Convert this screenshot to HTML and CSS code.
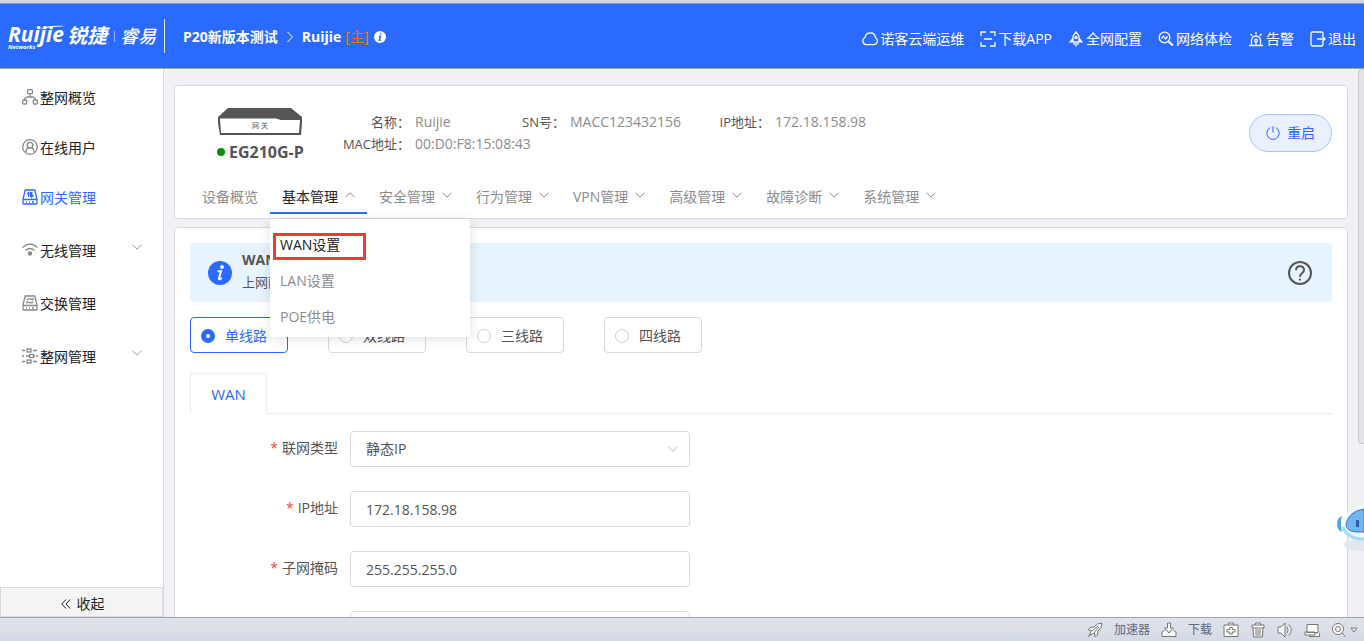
FILE: index.html
```html
<!DOCTYPE html>
<html lang="zh-CN">
<head>
<meta charset="utf-8">
<title>Ruijie 网关管理</title>
<link rel="stylesheet" href="styles.css">
</head>
<body>
<svg class="defs" aria-hidden="true">
  <symbol id="down" viewBox="0 0 10 6"><path d="M.5.7 5 5.200 9.500.7"/></symbol>
  <symbol id="up" viewBox="0 0 10 6"><path d="M.5 5.200 5 .7l4.500 4.500"/></symbol>
</svg>
<header class="header">
  <div class="logo">
    <span class="logo-latin"><span class="logo-name">Ruijie</span><small class="logo-sub">Networks</small></span>
    <span class="logo-cn">锐捷</span>
    <span class="logo-bar"></span>
    <span class="logo-brand">睿易</span>
    <svg class="logo-swoosh" viewBox="0 0 28 6" aria-hidden="true"><path d="M0 4Q10 0 27 1 13 2 0 4Z"/></svg>
  </div>
  <nav class="crumbs" aria-label="位置">
    <a href="#">P20新版本测试</a>
    <svg class="crumb-sep" viewBox="0 0 8 12"><path d="m1.500 1 5 5-5 5"/></svg>
    <a href="#">Ruijie</a>
    <span class="role">[主]</span>
    <svg class="crumb-info" viewBox="0 0 12 12"><circle cx="6" cy="6" r="6"/><path d="M6.700 2.200v1.200M5.100 5.200h1.200L5.400 9.200h1.300"/></svg>
  </nav>
  <nav class="tools" aria-label="工具">
    <a href="#"><svg class="icon" viewBox="0 0 16 16"><path d="M4.300 13.700A3.800 3.800 0 0 1 3 6.500C3.500 3.500 5.600 1.800 8.300 1.800c2.800 0 4.800 2 5.100 4.700a3.900 3.900 0 0 1-1.200 7.200Z"/></svg>诺客云端运维</a>
    <a href="#"><svg class="icon" viewBox="0 0 16 16"><path d="M1 5V1h5M10 1h5v4M1 11v4h5M10 15h5v-4M4 8h8"/></svg>下载APP</a>
    <a href="#"><svg class="icon" viewBox="0 0 16 16"><path d="M5 11V5.200L8 1l3 4.200V11ZM5 7.500 2.200 10.800H5M11 7.500l2.800 3.300H11M6 12v2M8 12v3.500M10 12v2"/><circle cx="8" cy="6.500" r="1"/></svg>全网配置</a>
    <a href="#"><svg class="icon" viewBox="0 0 16 16"><circle cx="6.500" cy="6.500" r="5.300"/><path d="m3.500 7.500 2-2.500L7.500 8l2-2.500"/><path class="thick" d="m10.800 10.800 4 3.700"/></svg>网络体检</a>
    <a href="#"><svg class="icon" viewBox="0 0 16 16"><path d="M1 14.500h14M3.500 14V9.500a4.500 4.500 0 0 1 9 0V14M8 1v2.500M2.500 3l1.800 1.800M13.500 3l-1.800 1.800M8 11v3"/><circle cx="8" cy="9.500" r="1.300"/></svg>告警</a>
    <a href="#"><svg class="icon" viewBox="0 0 16 16"><path d="M13 5V2.500Q13 1 11.500 1h-9Q1 1 1 2.500v11Q1 15 2.500 15h9q1.500 0 1.500-1.500V11M7 8h8M12 5l3 3-3 3"/></svg>退出</a>
  </nav>
</header>

<div class="main">
  <aside class="sidebar">
    <ul class="menu">
      <li><a href="#"><svg class="icon" viewBox="0 0 16 16"><rect x="5.500" y=".7" width="5" height="4" rx="1"/><rect x=".7" y="11" width="4" height="4" rx="1"/><rect x="11.300" y="11" width="4" height="4" rx="1"/><path d="M8 5v3M2.700 11V9.500L5 8h6l2.300 1.500V11"/></svg>整网概览</a></li>
      <li><a href="#"><svg class="icon" viewBox="0 0 16 16"><circle cx="8" cy="8" r="7.300"/><circle cx="8" cy="6.200" r="2.800"/><path d="M3.800 13.300c0-2.300 1-3.800 2.400-4.700M12.200 13.300c0-2.300-1-3.800-2.400-4.700"/></svg>在线用户</a></li>
      <li class="current"><a href="#"><svg class="icon" viewBox="0 0 16 16"><path d="M3.200 1h9.600l2.200 9v4.500q0 .5-.5.500h-13q-.5 0-.5-.5V10ZM1 10.500h14M4 13h1M7 13h1M10 13h2M6.500 8V3.500L5 5M8.500 3v5M9.800 3v5l1.500-1.800"/></svg>网关管理</a></li>
      <li class="tall"><a href="#"><svg class="icon" viewBox="0 0 16 16"><path d="M.5 5.500Q8-1.500 15.500 5.500M3.500 8.500Q8 4.500 12.500 8.500"/><circle class="solid" cx="8" cy="11.500" r="1.500"/></svg>无线管理<svg class="chev" viewBox="0 0 10 6"><use href="#down"/></svg></a></li>
      <li class="tall"><a href="#"><svg class="icon" viewBox="0 0 16 16"><path d="M3.200 1h9.600l2.200 9v4.500q0 .5-.5.500h-13q-.5 0-.5-.5V10ZM1 10.500h14M4 13h1M7 13h1M10 13h2M5 5q2-2.500 5-.5h1V3M11 6.500q-2 2.500-5 .5H5v1.500"/></svg>交换管理</a></li>
      <li class="tall"><a href="#"><svg class="icon" viewBox="0 0 16 16"><path d="M0 2.500h3M11 2.500h4M0 8h2M4 8h3M12 8h1M14 8h2M0 13.500h3M11 13.500h4"/><rect x="5" y="1" width="4" height="3"/><rect x="7.500" y="6.500" width="4" height="3"/><rect x="5" y="12" width="4" height="3"/></svg>整网管理<svg class="chev" viewBox="0 0 10 6"><use href="#down"/></svg></a></li>
    </ul>
    <button class="collapse" type="button"><svg viewBox="0 0 10 10"><path d="M5 .5.8 5 5 9.500M9.200.5 5 5l4.200 4.500"/></svg>收起</button>
  </aside>

  <main class="content">
    <section class="card device-card">
      <div class="device">
        <div class="device-id">
          <svg class="device-pic" viewBox="0 0 84 27"><path class="dark" d="M10 0h63l11 9v6l-1 12H2L0 15V9Z"/><path class="face" d="M2 10.500h56l5 1.500h19L81 25H3Z"/><text x="42" y="20">网 关</text></svg>
          <strong class="model"><span class="dot"></span>EG210G-P</strong>
        </div>
        <dl class="facts">
          <dt>名称：</dt><dd>Ruijie</dd>
          <dt>SN号：</dt><dd>MACC123432156</dd>
          <dt>IP地址：</dt><dd>172.18.158.98</dd>
          <dt>MAC地址：</dt><dd>00:D0:F8:15:08:43</dd>
        </dl>
        <button class="restart" type="button"><svg viewBox="0 0 14 14"><path d="M4.300 1.600a6.200 6.200 0 1 0 5.400 0M7 .3v6.200"/></svg>重启</button>
      </div>
      <nav class="subnav" aria-label="网关管理">
        <div><a href="#">设备概览</a></div>
        <div class="open"><a href="#">基本管理<svg class="chev" viewBox="0 0 10 6"><use href="#up"/></svg></a>
          <ul class="dropdown">
            <li class="marked"><a href="#">WAN设置</a></li>
            <li><a href="#">LAN设置</a></li>
            <li><a href="#">POE供电</a></li>
          </ul>
        </div>
        <div><a href="#">安全管理<svg class="chev" viewBox="0 0 10 6"><use href="#down"/></svg></a></div>
        <div><a href="#">行为管理<svg class="chev" viewBox="0 0 10 6"><use href="#down"/></svg></a></div>
        <div><a href="#">VPN管理<svg class="chev" viewBox="0 0 10 6"><use href="#down"/></svg></a></div>
        <div><a href="#">高级管理<svg class="chev" viewBox="0 0 10 6"><use href="#down"/></svg></a></div>
        <div><a href="#">故障诊断<svg class="chev" viewBox="0 0 10 6"><use href="#down"/></svg></a></div>
        <div><a href="#">系统管理<svg class="chev" viewBox="0 0 10 6"><use href="#down"/></svg></a></div>
      </nav>
    </section>

    <section class="card wan-card">
      <div class="notice">
        <svg class="notice-icon" viewBox="0 0 24 24"><circle cx="12" cy="12" r="12"/><path d="M9.500 10.200h3.500l-2.100 7.300q-.1 1 .8.800l2-1.300"/><circle class="pip" cx="14" cy="6" r="1.900"/></svg>
        <div class="notice-text"><strong>WAN</strong><span>上网配</span></div>
        <button class="help" type="button" aria-label="帮助"><svg viewBox="0 0 24 24"><circle cx="12" cy="12" r="11"/><path d="M8 9.200Q8 5.300 12 5.300t4 3.700q0 1.700-2 3.200t-2 3.600"/><path d="M12 17.800v1.800"/></svg></button>
      </div>
      <div class="lines" role="radiogroup" aria-label="线路">
        <label><input type="radio" name="line" checked>单线路</label>
        <label><input type="radio" name="line">双线路</label>
        <label><input type="radio" name="line">三线路</label>
        <label><input type="radio" name="line">四线路</label>
      </div>
      <div class="tabs"><button class="tab" type="button">WAN</button></div>
      <form class="form">
        <div class="row"><label for="type"><i>*</i>联网类型</label>
          <div class="select"><select id="type"><option>静态IP</option></select><svg class="chev" viewBox="0 0 10 6"><use href="#down"/></svg></div></div>
        <div class="row"><label for="ip"><i>*</i>IP地址</label><input id="ip" type="text" value="172.18.158.98"></div>
        <div class="row"><label for="mask"><i>*</i>子网掩码</label><input id="mask" type="text" value="255.255.255.0"></div>
        <div class="row"><span></span><input type="text" aria-label="网关"></div>
      </form>
    </section>
  </main>
  <div class="scrollbar" aria-hidden="true"><div class="thumb"></div></div>
</div>

<footer class="status">
  <button type="button"><svg viewBox="0 0 16 16"><path d="M15 1q-5 0-8 4L3 5.500 1.500 8l3 .5L2 13.500 7.500 11l.5 3.500 2.500-1.500.5-4q4-3 4-8ZM5 9l6-5M7 11l5-6M1 15l3-3"/></svg>加速器</button>
  <button type="button"><svg viewBox="0 0 16 16"><path d="M3.500 8.500 1 10v4.500h14V10l-2.500-1.500M6.500 1h3v5h3L8 11 3.500 6h3Z"/></svg>下载</button>
  <button type="button" aria-label="医生"><svg viewBox="0 0 16 16"><path d="M5.500 3V1h5v2M1 3h14v11.500H1ZM6.700 5.500h2.600v2H12V10H9.300v2H6.700v-2H4V7.500h2.700Z"/></svg></button>
  <button type="button" aria-label="清理"><svg viewBox="0 0 16 16"><path d="M5.500 3V1h5v2M2 3h12v3H2ZM3 6l.5 9h9L13 6M6 7v7M8 7v7M10 7v7"/></svg></button>
  <button type="button" aria-label="声音"><svg viewBox="0 0 16 16"><path d="M1 5h3l4-4v14l-4-4H1ZM10 5q2 3 0 6M12 2.500q4.500 5.500 0 11"/></svg></button>
  <button type="button" aria-label="窗口"><svg viewBox="0 0 16 16"><path d="M5 14.500h10.500V11M3 2.500h11v8H3ZM1 10h10v3H1Z"/></svg></button>
  <button class="zoom" type="button" aria-label="缩放"><svg viewBox="0 0 16 16"><circle cx="7" cy="7" r="5.500"/><circle cx="7" cy="7" r="2.500"/><path d="m11 11 3.500 3.500"/></svg><svg class="tri" viewBox="0 0 8 6"><path d="M1 1h6L4 5Z"/></svg></button>
</footer>
<svg class="robot" viewBox="0 0 28 48" aria-hidden="true"><ellipse class="r-shade" cx="26" cy="40" rx="18" ry="6"/><path class="r-ear" d="M6 11Q1 13 1 19t5 8Q4 19 6 11Z"/><path class="r-shell" d="M28 0Q13 2 8 13q-5 14 6 19 6 3 14 2Z"/><path class="r-ring" d="M7 22q4 12 21 12"/><path class="r-face" d="M28 4Q13 6 10 19q0 7 10 8h8Z"/><path class="r-eye" d="M20 15h3v7h-3Z"/></svg>
</body>
</html>
```
FILE: styles.css
```css
*, *::after { box-sizing: border-box; }
body {
  margin: 0;
  height: 100vh;
  display: flex;
  flex-direction: column;
  overflow: hidden;
  border-top: 3px solid #cdd3e0;
  background: #f0f1f5;
  color: #555;
  font: 14px/20px "Open Sans", "Noto Sans CJK SC", sans-serif;
}
a { color: inherit; text-decoration: none; }
ul, dl, dd { margin: 0; padding: 0; list-style: none; }
button, input, select { font: inherit; color: inherit; }
button { padding: 0; border: 0; background: none; }
svg { flex: none; fill: none; stroke: currentColor; }
.defs { position: absolute; width: 0; height: 0; }
.icon { width: 16px; height: 16px; stroke-width: 1.3; }
.chev { width: 10px; height: 6px; }

.header {
  flex: none;
  display: flex;
  align-items: center;
  height: 66px;
  padding-right: 8px;
  border-top: 1px solid #8c9cc0;
  border-bottom: 1px solid #a5a5a8;
  background: #2b6aff;
  color: #fff;
}
.logo {
  position: relative;
  display: flex;
  align-items: center;
  width: 165px;
  height: 34px;
  padding-left: 8px;
  border-right: 1px solid #dce6ff;
  font-style: italic;
  font-weight: bold;
}
.logo-latin { display: flex; flex-direction: column; width: 59px; padding-top: 4px; }
.logo-name { font: italic bold 21px/18px "Open Sans", sans-serif; }
.logo-sub { font-size: 6px; line-height: 8px; }
.logo-cn { font-size: 20px; }
.logo-bar { width: 1px; height: 11px; margin: 0 5px 0 7px; background: #8fb0ff; }
.logo-brand { font-size: 18px; font-weight: 500; }
.logo-swoosh { position: absolute; left: 39px; top: 6px; width: 28px; height: 6px; fill: #fff; stroke: none; }
.crumbs { display: flex; align-items: center; margin-left: 18px; padding-top: 2px; font-weight: bold; }
.crumb-sep { width: 8px; height: 12px; margin: 0 8px; }
.role { margin: 0 5px 0 4px; color: #ff6a1a; font-weight: normal; }
.crumb-info { width: 12px; height: 12px; fill: #fff; stroke: none; }
.crumb-info path { fill: none; stroke: #2b6aff; stroke-width: 1.5; }
.tools { display: flex; gap: 16px; margin-left: auto; padding-top: 6px; }
.tools a { display: flex; align-items: center; gap: 2px; }
.thick { stroke-width: 2.2; }
.solid { fill: currentColor; }

.main { flex: 1; min-height: 0; display: flex; }
.sidebar {
  flex: none;
  width: 164px;
  display: flex;
  flex-direction: column;
  justify-content: space-between;
  border-right: 1px solid #d9dade;
  background: #fff;
  color: #222;
}
.menu { padding-top: 4px; }
.menu a { display: flex; align-items: center; gap: 2px; height: 50px; padding: 0 21px 0 22px; }
.menu .tall { padding-top: 3px; }
.menu .icon { color: #888; margin-bottom: 2px; }
.menu .chev { margin: 0 0 8px auto; color: #999; }
.menu .current, .menu .current .icon { color: #2b6aff; }
.collapse {
  display: flex;
  align-items: center;
  justify-content: center;
  gap: 6px;
  height: 30px;
  padding: 3px 0 0 2px;
  border: 1px solid #d9d9d9;
  background: #f4f4f4;
}
.collapse svg { width: 10px; height: 10px; }

.content {
  flex: 1;
  min-width: 0;
  display: flex;
  flex-direction: column;
  gap: 8px;
  padding: 16px 10px 0;
  overflow: hidden;
}
.card { border: 1px solid #d8d9dc; border-radius: 4px; background: #fff; flex: none; }
.device-card { padding: 0 15px; }
.device { display: flex; align-items: flex-start; height: 89px; padding-top: 22px; }
.device-id { display: flex; flex-direction: column; gap: 7px; width: 150px; padding-left: 27px; }
.device-pic { width: 84px; height: 27px; margin-left: 1px; stroke: none; }
.dark { fill: #555; }
.face { fill: #fff; }
.device-pic text { font-size: 7px; text-anchor: middle; fill: #555; }
.model { display: flex; align-items: center; gap: 4px; white-space: nowrap; font-size: 16px; }
.dot { width: 8px; height: 8px; border-radius: 50%; background: #0a8f0a; }
.facts {
  display: grid;
  grid-template-columns: 75px 115px 40px 160px 45px auto;
  row-gap: 2px;
  padding-top: 4px;
}
.facts dt { padding-right: 5px; font-size: 13px; white-space: nowrap; justify-self: end; }
.facts dd { color: #8c8c8c; white-space: nowrap; }
.restart {
  display: flex;
  align-items: center;
  justify-content: center;
  gap: 7px;
  width: 83px;
  height: 38px;
  margin: 6px 0 0 auto;
  border: 1px solid #aac3ff;
  border-radius: 20px;
  background: #eaf0ff;
  color: #2b6aff;
}
.restart svg { width: 14px; height: 14px; }
.subnav { display: flex; color: #8c8c8c; }
.subnav > div { position: relative; padding-bottom: 4px; }
.subnav > div > a { display: flex; align-items: center; gap: 7px; height: 39px; padding: 6px 12px 0; border-bottom: 2px solid transparent; }
.subnav .chev { margin-bottom: 4px; }
.subnav .open > a { color: #222; border-color: #2b6aff; }
.subnav .open .chev { color: #888; }
.dropdown {
  position: absolute;
  z-index: 2;
  left: 0;
  top: 100%;
  width: 200px;
  margin-top: 1px;
  padding: 8px 0 2px;
  border-radius: 2px;
  background: #fff;
  box-shadow: 0 2px 12px rgba(0, 0, 0, .12);
}
.dropdown li { position: relative; }
.dropdown a { display: block; padding: 8px 10px; }
.dropdown .marked { color: #222; }
.marked::after { content: ""; position: absolute; left: 3px; top: 6px; width: 93px; height: 27px; border: 3px solid #f93636; }

.wan-card { padding: 15px; }
.notice { display: flex; align-items: center; height: 59px; padding: 0 20px 0 18px; border-radius: 4px; background: #e7f4ff; }
.notice-icon { width: 24px; height: 24px; fill: #2b6aff; stroke: none; }
.notice-icon path { stroke: #fff; stroke-width: 2; fill: none; }
.notice-icon .pip { fill: #fff; }
.notice-text { display: flex; flex-direction: column; gap: 2px; margin-left: 10px; padding-bottom: 4px; font-size: 13px; }
.notice-text strong { font-size: 14px; }
.help { margin-left: auto; height: 24px; color: #555; }
.help svg { width: 24px; height: 24px; stroke-width: 2; }
.lines { display: flex; gap: 40px; margin-top: 15px; }
.lines label {
  display: flex;
  align-items: center;
  gap: 10px;
  width: 98px;
  height: 36px;
  padding: 2px 0 0 10px;
  border: 1px solid #d9d9d9;
  border-radius: 4px;
}
.lines input { appearance: none; width: 14px; height: 14px; margin: 0; border: 1px solid #d0d0d0; border-radius: 50%; background: #fff; }
.lines input:checked { border: 5px solid #2b6aff; }
.lines label:has(:checked) { border-color: #2b6aff; color: #2b6aff; }
.tabs { margin-top: 20px; height: 41px; border-bottom: 1px solid #ebebf0; }
.tab { width: 77px; height: 41px; border: 1px solid #ebebf0; border-bottom-color: #fff; border-radius: 4px 4px 0 0; background: #fff; color: #2b6aff; font-size: 15px; }
.form { display: grid; gap: 24px; padding-top: 17px; }
.row { display: grid; grid-template-columns: 148px 340px; gap: 12px; height: 36px; }
.row label { padding-top: 7px; text-align: right; }
.row i { margin-right: 4px; color: #f04a3c; font-style: normal; }
.row input, .row select { width: 100%; height: 36px; padding: 0 15px; border: 1px solid #d9d9d9; border-radius: 4px; background: #fff; }
.select { display: grid; align-items: center; }
.select select { grid-area: 1 / 1; appearance: none; }
.select .chev { grid-area: 1 / 1; justify-self: end; margin-right: 12px; color: #bbb; }

.scrollbar { flex: none; width: 6px; background: #f0f1f5; }
.thumb { height: 375px; max-height: 100%; border: 1px solid #c8c9cd; border-right: 0; border-radius: 4px 0 0 4px; background: #e2e4e8; }

.status {
  flex: none;
  display: flex;
  align-items: center;
  justify-content: flex-end;
  gap: 11px;
  height: 24px;
  padding-right: 6px;
  border-top: 1px solid #9fa3ad;
  background: linear-gradient(#dfe3ea, #d4dae5);
  color: #5c6880;
  font-size: 12px;
}
.status button { display: flex; align-items: center; gap: 11px; }
.status svg { width: 16px; height: 16px; stroke: #777; fill: #fafafa; }
.status .zoom { gap: 3px; }
.status .tri { width: 8px; height: 6px; }

.robot { position: absolute; right: 0; bottom: 88px; width: 28px; height: 48px; stroke: none; }
.r-shade { fill: #e3e5ef; }
.r-ear { fill: #5aa0e6; }
.r-shell { fill: #f0f8fd; }
.r-ring { stroke: #9fdcf8; stroke-width: 3; }
.r-face { fill: #72b6f0; stroke: #4670c4; stroke-width: 1; }
.r-eye { fill: #3459b4; }
```
